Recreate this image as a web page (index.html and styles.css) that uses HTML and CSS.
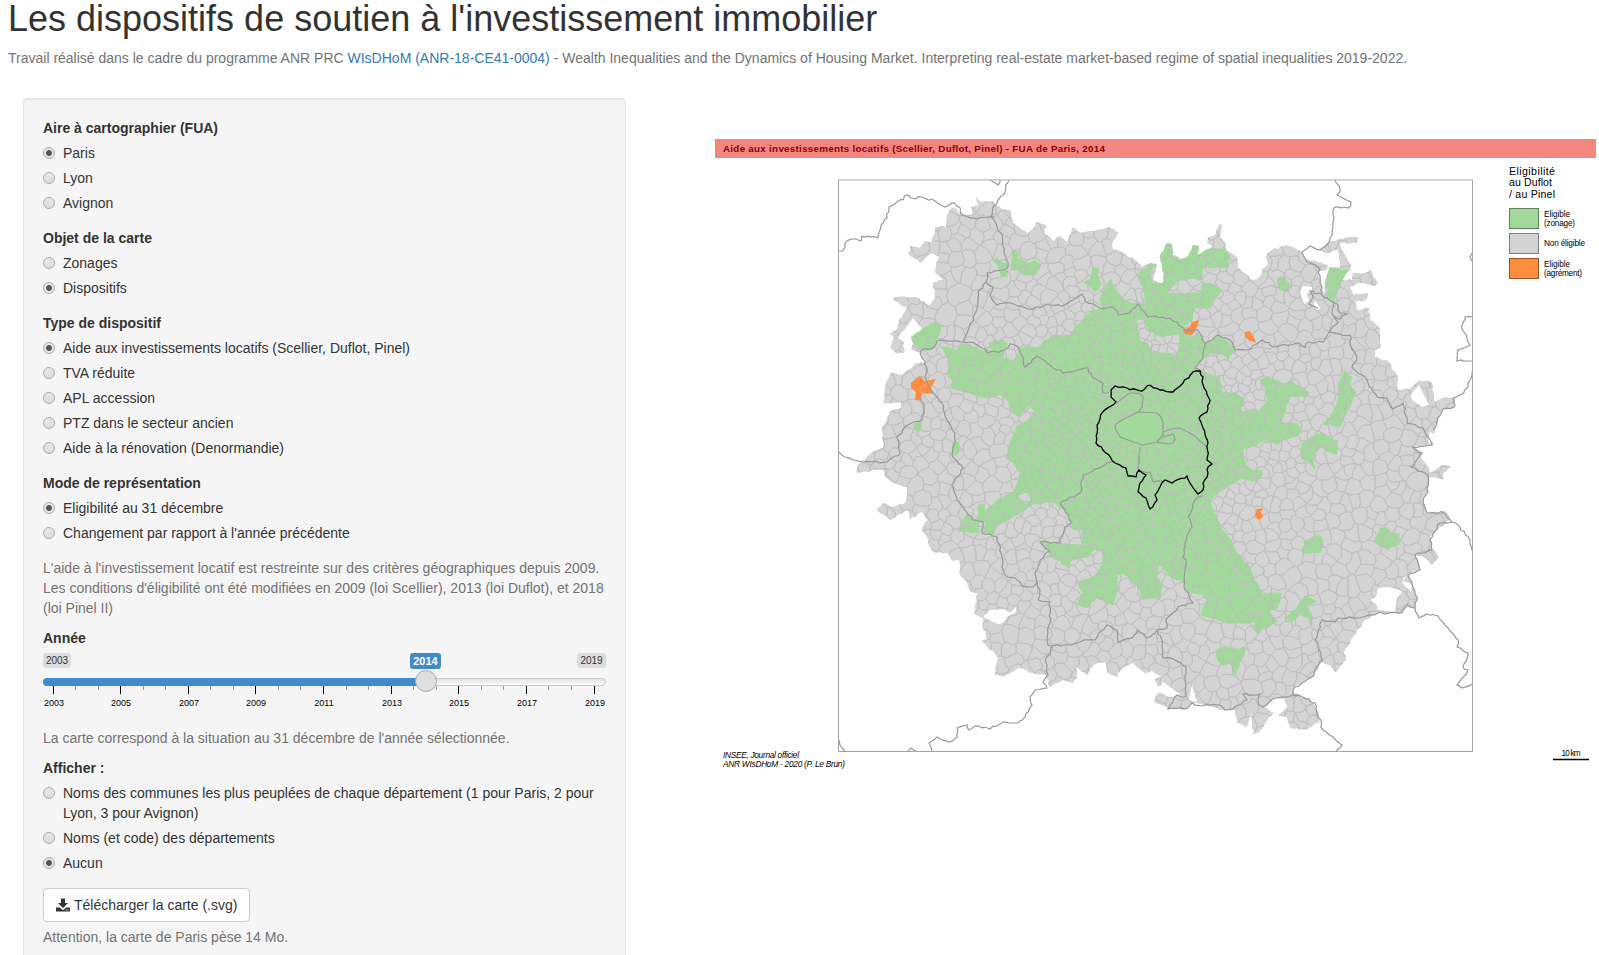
FILE: index.html
```html
<!DOCTYPE html>
<html lang="fr">
<head>
<meta charset="utf-8">
<title>Les dispositifs de soutien à l'investissement immobilier</title>
<link rel="stylesheet" href="styles.css">
</head>
<body>
<div class="page">
  <h1 class="title">Les dispositifs de soutien à l'investissement immobilier</h1>
  <p class="help intro">Travail réalisé dans le cadre du programme ANR PRC <a class="link" href="#">WIsDHoM (ANR-18-CE41-0004)</a> - Wealth Inequalities and the Dynamics of Housing Market. Interpreting real-estate market-based regime of spatial inequalities 2019-2022.</p>
  <div class="row">
    <form class="well">
      <div class="group">
        <div class="label">Aire à cartographier (FUA)</div>
        <div class="radio"><i class="dot on"></i><span>Paris</span></div>
        <div class="radio"><i class="dot"></i><span>Lyon</span></div>
        <div class="radio"><i class="dot"></i><span>Avignon</span></div>
      </div>
      <div class="group">
        <div class="label">Objet de la carte</div>
        <div class="radio"><i class="dot"></i><span>Zonages</span></div>
        <div class="radio"><i class="dot on"></i><span>Dispositifs</span></div>
      </div>
      <div class="group">
        <div class="label">Type de dispositif</div>
        <div class="radio"><i class="dot on"></i><span>Aide aux investissements locatifs (Scellier, Duflot, Pinel)</span></div>
        <div class="radio"><i class="dot"></i><span>TVA réduite</span></div>
        <div class="radio"><i class="dot"></i><span>APL accession</span></div>
        <div class="radio"><i class="dot"></i><span>PTZ dans le secteur ancien</span></div>
        <div class="radio"><i class="dot"></i><span>Aide à la rénovation (Denormandie)</span></div>
      </div>
      <div class="group">
        <div class="label">Mode de représentation</div>
        <div class="radio"><i class="dot on"></i><span>Eligibilité au 31 décembre</span></div>
        <div class="radio"><i class="dot"></i><span>Changement par rapport à l'année précédente</span></div>
      </div>
      <p class="help">L'aide à l'investissement locatif est restreinte sur des critères géographiques depuis 2009. Les conditions d'éligibilité ont été modifiées en 2009 (loi Scellier), 2013 (loi Duflot), et 2018 (loi Pinel II)</p>
      <div class="label">Année</div>
      <svg class="slider" id="slider" viewBox="43 653 563 60">
        <defs>
          <linearGradient id="track" x1="0" y1="0" x2="0" y2="1"><stop offset="0" stop-color="#dedede"/><stop offset="1" stop-color="#fff"/></linearGradient>
        </defs>
        <rect x="43" y="653" width="28" height="15" rx="3" fill="#dcdcdc"/>
        <text class="s-end" x="57" y="664">2003</text>
        <rect x="577" y="653" width="29" height="15" rx="3" fill="#dcdcdc"/>
        <text class="s-end" x="591.5" y="664">2019</text>
        <rect x="43.5" y="678.5" width="562" height="7" rx="3.5" fill="url(#track)" stroke="#ccc"/>
        <path d="M426 678H47a4 4 0 0 0 0 8H426z" fill="#428bca"/>
        <g id="ticks"></g>
        <rect x="410" y="653" width="31" height="16" rx="3" fill="#428bca"/>
        <text class="s-cur" x="425.5" y="665">2014</text>
        <circle cx="426" cy="681" r="10.5" fill="#dedede" stroke="#ababab"/>
      </svg>
      <p class="help">La carte correspond à la situation au 31 décembre de l'année sélectionnée.</p>
      <div class="group">
        <div class="label">Afficher :</div>
        <div class="radio"><i class="dot"></i><span>Noms des communes les plus peuplées de chaque département (1 pour Paris, 2 pour Lyon, 3 pour Avignon)</span></div>
        <div class="radio"><i class="dot"></i><span>Noms (et code) des départements</span></div>
        <div class="radio"><i class="dot on"></i><span>Aucun</span></div>
      </div>
      <a class="btn" href="#"><svg class="icon" viewBox="0 0 14 14"><path fill="#333" d="M5 .5h4v4.500h3L7 10 2 5h3zM0 9.500h3.800L7 12.200 10.200 9.500H14v4H0z"/><path fill="#fff" d="M9.500 11.500h1v1h-1zM11.500 11.500h1v1h-1z"/></svg>Télécharger la carte (.svg)</a>
      <p class="help after">Attention, la carte de Paris pèse 14 Mo.</p>
    </form>
    <svg class="map" viewBox="715 139 881 640">
      <defs><clipPath id="land"><path id="clip" clip-rule="evenodd"/></clipPath></defs>
      <rect x="715" y="139" width="881" height="19" fill="#f3877f"/>
      <text class="m-title" x="723" y="152" textLength="382">Aide aux investissements locatifs (Scellier, Duflot, Pinel) - FUA de Paris, 2014</text>
      <g id="areas"></g>
      <path id="mesh" clip-path="url(#land)"/>
      <g id="lines"></g>
      <path d="M838.500 179.800V751.500H1472.500V179.800" fill="none" stroke="#a3a3a3"/>
      <path d="M838 179.800H1473" stroke="#bdbdbd" stroke-width="1.300"/>
      <g class="m-head">
        <text x="1509" y="175" textLength="46">Eligibilité</text>
        <text x="1509" y="186" textLength="43">au Duflot</text>
        <text x="1509" y="198" textLength="46">/ au Pinel</text>
      </g>
      <rect x="1509.500" y="208.500" width="29" height="20" fill="#a1d99b" stroke="#61825d"/>
      <rect x="1509.500" y="233.500" width="29" height="20" fill="#d3d3d3" stroke="#7f7f7f"/>
      <rect x="1509.500" y="258.500" width="29" height="20" fill="#fd8d3c" stroke="#985524"/>
      <g class="m-label">
        <text x="1544" y="217" textLength="26">Eligible</text>
        <text x="1544" y="226" textLength="31">(zonage)</text>
        <text x="1544" y="246" textLength="41">Non éligible</text>
        <text x="1544" y="267" textLength="26">Eligible</text>
        <text x="1544" y="276" textLength="38">(agrément)</text>
        <text x="1561.500" y="756" textLength="19">10 km</text>
      </g>
      <path d="M1553 759.500H1589" stroke="#000" stroke-width="1.300"/>
      <g class="m-src">
        <text x="723" y="758" textLength="76">INSEE, Journal officiel</text>
        <text x="723" y="767" textLength="122">ANR WIsDHoM - 2020 (P. Le Brun)</text>
      </g>
    </svg>
  </div>
</div>
<script src="map.js"></script>
</body>
</html>
```

FILE: styles.css
```css
* { box-sizing: border-box; }
body {
  margin: 0;
  background: #fff;
  color: #333;
  font: 14px/20px "Liberation Sans", Arial, sans-serif;
}
.page { height: 955px; padding: 0 0 0 8px; overflow: hidden; }
.title { margin: 0; font-size: 36px; font-weight: 500; line-height: 38.6px; white-space: nowrap; }
.help { margin: 0 0 10px; color: #737373; }
.intro { margin: 9.400px 0 30px; white-space: nowrap; }
.link { color: #337ab7; text-decoration: none; }
.row { display: flex; align-items: flex-start; gap: 89px; padding-left: 15px; }
.well {
  flex: none;
  width: 603px;
  height: 900px;
  padding: 19px;
  background: #f5f5f5;
  border: 1px solid #e3e3e3;
  border-radius: 4px;
  box-shadow: inset 0 1px 1px rgba(0, 0, 0, .05);
}
.group { margin-bottom: 15px; }
.label { font-weight: 700; }
.radio { display: flex; gap: 8px; margin-top: 5px; }
.dot {
  flex: none;
  width: 12px;
  height: 12px;
  margin-top: 4px;
  border: 1px solid #acacac;
  border-radius: 50%;
  background: linear-gradient(#e8e8e8, #dcdcdc);
}
.dot.on { background: radial-gradient(circle, #585858 0 2.600px, #e6e6e6 3.300px); }
.slider { display: block; width: 563px; height: 60px; margin: 5px 0 15px; }
.slider text { text-anchor: middle; }
.s-end { font-size: 10px; fill: #333; }
.s-cur { font-size: 11px; font-weight: 700; fill: #fff; }
.s-tick { font-size: 9px; fill: #000; }
.btn {
  display: inline-flex;
  align-items: center;
  gap: 4px;
  height: 34px;
  padding: 0 12px;
  border: 1px solid #ccc;
  border-radius: 4px;
  background: #fff;
  color: #333;
  text-decoration: none;
  vertical-align: top;
}
.icon { width: 14px; height: 14px; }
.after { margin-top: 5px; }
.map { flex: none; width: 881px; height: 640px; margin-top: 41px; }
.m-title { font-size: 9.800px; font-weight: 700; fill: #8b0000; }
.m-head { font-size: 10.600px; fill: #000; }
.m-label { font-size: 8.200px; fill: #000; }
.m-src { font-size: 8.300px; font-style: italic; fill: #000; }
#mesh { fill: none; stroke: #bebebe; stroke-width: .75; }
```

FILE: map.js
```js
const NS = 'http://www.w3.org/2000/svg';
let seed = 7;
const rnd = () => ((seed = (seed * 16807) % 2147483647) / 2147483647);
const parse = s => s.trim().split(/\s+/).map(p => p.split(',').map(Number));

function add(parent, name, attrs) {
  const el = document.createElementNS(NS, name);
  for (const k in attrs) el.setAttribute(k, attrs[k]);
  document.getElementById(parent).appendChild(el);
  return el;
}

// Adds small wiggles between the vertices of a line.
function rough(pts, amp, closed) {
  const src = closed ? pts.concat([pts[0]]) : pts;
  const out = [src[0]];
  for (let i = 1; i < src.length; i++) {
    const [ax, ay] = src[i - 1], [bx, by] = src[i];
    const n = Math.max(1, Math.round(Math.hypot(bx - ax, by - ay) / 3.5));
    for (let k = 1; k < n; k++) {
      out.push([ax + (bx - ax) * k / n + (rnd() - .5) * amp, ay + (by - ay) * k / n + (rnd() - .5) * amp]);
    }
    out.push([bx, by]);
  }
  return out;
}
const toPath = (pts, closed) => 'M' + pts.map(p => p[0].toFixed(1) + ' ' + p[1].toFixed(1)).join('L') + (closed ? 'Z' : '');

const outline = `976,197 983,202 993,201 1002,209 1010,210 1013,223 1028,233 1033,228 1036,222 1047,226 1044,233 1054,241 1060,236 1067,242 1073,227 1080,233 1097,230 1109,227 1119,233 1113,240 1113,249 1133,258 1142,267 1148,264 1157,264 1153,280 1163,283 1164,274 1160,256 1167,243 1172,244 1173,255 1180,259 1188,256 1193,245 1199,246 1197,255 1203,252 1212,247 1207,243 1208,238 1213,236 1219,224 1222,225 1220,237 1225,242 1226,250 1237,257 1238,267 1253,280 1261,275 1262,269 1268,264 1266,257 1272,250 1287,245 1303,252 1305,258 1328,265 1327,270 1318,272 1322,287 1325,293 1325,280 1330,267 1340,267 1338,250 1327,253 1320,250 1330,241 1350,237 1358,237 1357,243 1340,243 1343,252 1351,265 1348,272 1342,280 1352,280 1353,273 1365,273 1370,270 1378,282 1375,286 1360,283 1350,287 1353,295 1368,293 1365,300 1355,302 1357,310 1369,308 1370,320 1380,328 1381,347 1375,350 1375,357 1387,360 1398,377 1398,390 1410,389 1419,380 1432,383 1435,402 1442,398 1454,397 1454,407 1443,409 1435,425 1433,445 1427,445 1413,447 1422,452 1421,458 1429,468 1430,473 1442,465 1451,467 1443,473 1444,480 1429,477 1428,492 1423,500 1427,513 1445,511 1450,520 1440,527 1430,537 1432,548 1439,557 1432,565 1425,558 1415,555 1420,570 1408,574 1402,580 1413,585 1417,598 1415,608 1407,605 1402,613 1378,613 1365,620 1353,637 1344,653 1346,660 1335,672 1330,665 1322,662 1312,677 1294,687 1293,694 1310,700 1317,710 1320,722 1307,730 1290,728 1287,717 1277,716 1287,707 1285,698 1275,698 1265,707 1273,713 1265,723 1258,733 1253,734 1252,713 1247,727 1237,722 1235,710 1223,710 1210,706 1192,703 1187,709 1168,709 1154,702 1158,693 1173,697 1180,694 1163,682 1158,687 1154,680 1161,677 1152,671 1145,673 1133,663 1123,668 1117,677 1107,672 1105,662 1093,666 1087,675 1076,667 1077,678 1073,683 1063,680 1050,687 1046,675 1033,673 1020,668 1003,677 994,675 998,657 987,647 982,641 987,639 983,627 983,618 974,613 977,593 971,592 967,583 960,575 959,560 952,561 947,553 933,552 922,528 928,520 922,512 910,520 907,510 890,520 877,510 883,503 892,507 906,502 907,487 899,485 885,477 883,470 857,473 858,465 872,452 883,448 882,427 892,410 901,408 900,402 884,404 886,382 892,372 902,375 917,363 926,363 920,352 911,350 913,343 911,337 922,329 913,318 902,332 897,338 904,342 904,353 897,354 890,347 894,338 889,334 897,330 899,320 907,307 893,300 894,297 915,297 930,305 935,297 933,282 943,280 935,270 939,257 931,253 920,263 908,253 910,246 920,248 925,241 932,243 935,227 946,227 947,215 954,207 963,215 972,215 971,207 978,205`;

const holes = [
  '1419,385 1429,405 1422,407 1412,400 1411,394',
  '1395,612 1397,598 1403,592 1397,589 1387,587 1378,588 1376,597 1370,600 1377,605 1377,610',
  '983,617 990,610 1005,609 1010,613 1016,607 1016,612 1007,617 1003,623 998,624',
  '1303,286 1312,287 1312,291 1307,293 1309,301 1304,304 1300,292',
  '1315,300 1320,308 1318,311 1313,304',
  '1430,432 1433,433 1433,442 1429,444 1428,438',
  '1192,684 1189,700 1197,702 1194,692',
  '1407,575 1413,582 1411,592 1402,583'
];

const green = [
  `940,345 957,350 960,344 967,343 982,350 992,350 988,343 1002,339 1008,344 1005,352 1003,358 1014,360 1020,347 1037,347 1053,335 1070,335 1082,320 1092,310 1102,307 1100,298 1105,287 1111,278 1115,290 1125,300 1133,303 1145,303 1143,290 1137,275 1148,264 1157,264 1150,273 1153,283 1163,283 1164,274 1160,256 1167,243 1172,244 1173,255 1180,259 1188,256 1193,245 1199,246 1197,255 1203,252 1212,247 1225,250 1231,256 1227,268 1203,268 1202,280 1190,279 1177,282 1167,293 1200,293 1203,282 1215,285 1223,290 1215,298 1210,307 1195,308 1193,320 1183,327 1193,337 1198,333 1207,342 1220,335 1235,350 1228,360 1220,353 1208,355 1195,368 1207,373 1220,377 1223,392 1237,392 1243,400 1242,411 1260,410 1267,400 1265,388 1259,380 1268,377 1283,383 1292,380 1297,385 1310,392 1307,397 1290,398 1285,412 1282,422 1297,423 1303,432 1297,437 1283,440 1278,445 1265,440 1253,447 1243,450 1245,463 1252,470 1262,470 1263,475 1257,482 1243,479 1233,483 1222,490 1210,500 1215,513 1223,530 1232,540 1237,553 1250,567 1257,583 1263,593 1282,593 1278,608 1270,612 1278,622 1263,628 1258,635 1252,628 1255,623 1228,624 1200,615 1207,600 1203,595 1187,593 1183,582 1170,577 1160,565 1157,577 1163,587 1160,598 1142,600 1138,588 1129,578 1124,574 1117,575 1118,590 1113,605 1097,598 1087,608 1075,605 1083,593 1077,582 1092,577 1102,565 1103,552 1095,550 1087,558 1073,560 1068,568 1057,560 1047,557 1050,552 1040,542 1060,543 1083,545 1082,530 1072,530 1070,522 1063,510 1053,502 1032,505 1020,513 997,527 993,535 983,533 985,522 979,523 980,533 958,532 967,513 977,520 978,505 985,503 985,510 1000,498 1013,492 1020,472 1012,462 1005,457 1012,437 1017,423 1022,418 1010,412 1008,402 1000,395 983,398 967,393 950,388 952,380 947,373 948,360`,
  '992,260 997,256 1002,262 1008,263 1007,277 1002,277 998,267',
  '1012,250 1018,252 1018,258 1027,263 1035,260 1042,265 1036,275 1024,275 1010,268 1012,258',
  '1092,268 1099,268 1098,275 1102,285 1095,292 1088,286 1083,283 1091,278',
  '911,337 922,329 935,322 943,325 937,340 932,350 922,351 913,343',
  '1277,278 1285,277 1292,287 1287,292 1278,288',
  '1330,267 1349,270 1342,281 1338,292 1334,302 1325,298 1328,290 1325,283',
  '1344,370 1352,377 1350,384 1356,392 1352,402 1348,410 1340,427 1323,425 1333,412 1338,398 1338,385',
  '1322,433 1330,438 1338,440 1337,455 1327,452 1320,447 1313,455 1315,470 1308,462 1300,457 1302,443 1310,437',
  '1302,550 1306,540 1320,535 1323,540 1321,553 1302,554',
  '1373,541 1380,528 1388,528 1390,533 1400,534 1400,544 1388,550 1378,545',
  '1305,595 1317,602 1307,606 1313,617 1311,627 1308,618 1300,615 1293,622 1285,618 1297,607',
  '1216,650 1225,646 1238,649 1245,646 1245,655 1240,662 1236,675 1240,680 1234,674 1230,663 1224,666 1217,660',
  '913,424 922,421 921,429 918,435 914,428',
  '953,442 959,442 961,448 956,456 952,455'
];

const greyInGreen = [
  '1137,320 1144,320 1150,332 1160,337 1178,334 1180,345 1176,355 1168,353 1152,352 1148,343 1140,340',
  '1017,421 1028,405 1035,412 1028,420 1018,425',
  '1018,495 1027,493 1032,500 1025,504'
];

const orange = [
  '911,383 920,376 925,381 936,379 931,387 933,394 922,393 921,400 915,400 916,392 911,388',
  '1183,330 1190,327 1192,322 1199,320 1197,327 1192,335 1185,334',
  '1245,332 1250,331 1256,342 1250,341 1245,337',
  '1257,509 1263,508 1261,512 1263,517 1259,520 1255,516'
];

const borders = [
  '839,251 843,251 845,243 852,239 861,241 862,236 878,238 883,223 887,218 889,207 897,202 908,195 911,198 922,197 935,201 945,207 955,203 963,215 977,219 988,217 995,217',
  '1009,180 1005,192 998,200 993,207 991,217 997,227 1002,235 1004,253 1008,267 1002,270 987,273 986,282 978,292 977,307 972,322 963,342 950,341 937,341 933,348 922,350 920,352 927,368 925,378 935,395 942,403 947,420 955,433 952,455 963,468 952,485 957,500 973,520 983,522 982,533 997,537 1002,557 1002,567 1007,577 1015,578 1022,586 1033,587 1037,582 1035,573 1040,560 1047,552 1050,552 1040,542 1060,543 1065,527 1072,522 1060,503 1080,493 1083,475 1107,463 1115,462',
  '986,282 993,287 990,295 997,305 1010,303 1028,309 1050,305 1062,306 1082,294 1085,301 1100,308 1113,307 1118,315 1130,313 1138,304 1148,317 1163,317 1177,322 1185,330 1198,330 1205,344 1203,358 1195,368 1202,372',
  '1205,344 1218,335 1232,342 1235,350 1247,350 1262,340 1273,347 1297,343 1305,347 1308,342 1323,342 1329,332 1338,322 1332,313 1333,302 1322,295 1310,291 1313,297 1309,304 1318,308',
  '1322,295 1322,287 1318,267 1307,262 1302,252 1310,246 1320,250 1329,242 1333,227 1334,208 1348,208 1351,202 1337,195 1340,190 1335,180',
  '1333,302 1338,305 1340,313 1347,314 1340,319 1334,316',
  '1329,332 1350,335 1351,347 1357,357 1352,367 1367,380 1377,397 1387,398 1393,409 1403,403 1407,423 1423,428 1428,437 1432,445 1413,447 1422,453 1411,467 1428,475 1428,492 1423,502 1427,513 1443,512 1452,522 1460,527 1470,540 1472,550',
  '1452,522 1440,523 1430,540 1432,550 1415,555 1420,570 1408,575 1413,587 1417,600 1415,608 1407,605 1402,613 1378,613 1362,617 1338,618 1335,622 1322,620 1315,640 1322,660 1312,677 1295,687 1293,694 1298,695 1275,698 1263,707 1258,703 1260,694 1243,694 1247,700 1233,709 1225,710 1220,705 1202,706 1192,703 1188,708 1168,709 1177,695 1185,697 1186,667 1175,660 1163,658 1162,640 1157,630 1167,628 1167,618 1178,607 1193,603 1184,587 1186,560 1183,557 1185,543 1192,527 1188,517 1195,500 1203,495',
  '1157,630 1147,638 1138,630 1132,638 1118,642 1117,630 1107,625 1095,640 1082,641 1068,645 1048,645 1047,638 1050,623 1050,602 1038,600 1040,590 1037,582',
  '1053,646 1046,658 1048,675 1043,682 1047,688 1035,690 1030,697 1032,705 1025,717 1018,723 1003,722 990,729 975,726 969,730 967,725 957,728 957,737 950,742 937,737 929,743 932,751',
  '839,452 845,457 862,462 887,462 900,453 897,437 908,425 922,420 924,407 920,398',
  '1415,608 1419,618 1427,614 1438,616 1448,628 1458,640 1457,647 1468,653 1463,667 1468,670 1457,685 1462,688 1472,684',
  '1298,695 1315,703 1317,713 1323,730 1333,737 1342,745 1336,751',
  '1472,372 1468,387 1460,395 1454,398 1454,407 1443,409 1437,423 1433,430',
  '1472,317 1465,317 1462,329 1470,345 1458,350 1457,361 1472,361',
  '1472,253 1470,257 1472,261',
  '990,180 995,183 998,185 1000,180',
  '839,740 840,745 845,751',
  '908,751 911,748 916,751',
  '963,342 970,342 982,348 987,353 1005,350 1010,344 1018,347 1023,357 1025,367 1037,356 1050,365 1063,373 1088,368 1092,377 1103,383 1103,392 1109,393'
];

const city = '1138,412 1157,413 1161,417 1163,423 1163,435 1157,442 1142,445 1131,441 1120,437 1115,428 1116,424 1122,420 1138,412';
const inner = [
  '1117,402 1130,393 1139,393 1143,397 1142,407 1138,412',
  '1163,432 1172,429 1180,428 1193,435 1207,447',
  '1163,437 1173,434 1175,439 1173,443 1168,444 1157,442',
  '1140,447 1138,470 1147,473 1150,472 1153,482 1162,480'
];

const ring = '1150,385 1142,391 1127,388 1115,386 1111,390 1111,397 1116,402 1102,413 1097,425 1096,443 1103,450 1115,463 1126,468 1128,476 1136,477 1139,470 1146,475 1140,483 1138,492 1146,498 1150,509 1157,500 1155,495 1165,480 1172,483 1187,476 1190,483 1198,494 1203,490 1203,483 1208,473 1208,467 1212,464 1207,460 1208,443 1203,428 1199,418 1207,412 1210,400 1202,382 1203,377 1200,371 1193,372 1183,383 1173,392 1160,390 1150,385';

const land = toPath(rough(parse(outline), 2, true), true) + holes.map(h => toPath(parse(h), true)).join('');
document.getElementById('clip').setAttribute('d', land);
add('areas', 'path', { d: land, fill: '#d3d3d3', 'fill-rule': 'evenodd' });
green.forEach(g => add('areas', 'path', { d: toPath(rough(parse(g), 1.6, true), true), fill: '#a1d99b' }));
greyInGreen.forEach(g => add('areas', 'path', { d: toPath(rough(parse(g), 1.4, true), true), fill: '#d3d3d3' }));

// Commune mesh: irregular Voronoi cells, smaller near the centre.
const spacing = (x, y) => {
  if (Math.hypot(x - 955, y - 306) < 13 || Math.hypot(x - 1224, y - 600) < 15) return 24;
  const base = Math.min(10.5, 5.4 + Math.max(0, Math.hypot(x - 1140, y - 430) - 60) / 28);
  return base * (.55 + rnd() * .8);
};
const sites = [];
for (let i = 0; i < 14000; i++) {
  const x = 850 + rnd() * 612, y = 190 + rnd() * 552, r = spacing(x, y);
  if (sites.every(s => Math.hypot(s[0] - x, s[1] - y) > (r + s[2]) / 2)) sites.push([x, y, r]);
}
let mesh = '';
sites.forEach(([x, y]) => {
  const R = 22;
  let cell = [[x - R, y - R], [x + R, y - R], [x + R, y + R], [x - R, y + R]];
  sites.forEach(([u, v]) => {
    const dx = u - x, dy = v - y;
    if ((!dx && !dy) || Math.abs(dx) > 42 || Math.abs(dy) > 42) return;
    const c = (u * u + v * v - x * x - y * y) / 2;
    const f = p => p[0] * dx + p[1] * dy - c;
    const next = [];
    cell.forEach((p, i) => {
      const q = cell[(i + 1) % cell.length], a = f(p), b = f(q);
      if (a <= 0) next.push(p);
      if (a * b < 0) next.push([p[0] + (q[0] - p[0]) * a / (a - b), p[1] + (q[1] - p[1]) * a / (a - b)]);
    });
    cell = next;
  });
  // Shared edges bend the same way on both sides.
  const bent = [];
  cell.forEach((p, i) => {
    const q = cell[(i + 1) % cell.length];
    const mx = (p[0] + q[0]) / 2, my = (p[1] + q[1]) / 2, len = Math.hypot(p[0] - q[0], p[1] - q[1]);
    bent.push(p);
    if (len > 3) bent.push([mx + Math.sin(mx * 7.3 + my * 3.1) * len * .2, my + Math.cos(mx * 2.7 - my * 5.9) * len * .2]);
  });
  if (bent.length) mesh += toPath(bent, true);
});
document.getElementById('mesh').setAttribute('d', mesh);

orange.forEach(o => add('lines', 'path', { d: toPath(parse(o), true), fill: '#fd8d3c' }));
add('lines', 'path', { d: 'M919 391L921 387L929 383M919 391L923 393', fill: 'none', stroke: '#c9b09c', 'stroke-width': .8 });
borders.forEach(b => add('lines', 'path', { d: toPath(rough(parse(b), 2.4)), fill: 'none', stroke: '#999', 'stroke-width': 1.2 }));
add('lines', 'path', { d: toPath(parse(city), true), fill: '#a1d99b', stroke: '#999', 'stroke-width': 1.2 });
inner.forEach(b => add('lines', 'path', { d: toPath(rough(parse(b), .6)), fill: 'none', stroke: '#999', 'stroke-width': 1.2 }));
add('lines', 'path', { d: toPath(rough(parse(ring), 2)), fill: 'none', stroke: '#000', 'stroke-width': 1.3 });

// Slider graduations.
for (let i = 0; i <= 24; i++) {
  const major = i % 3 === 0, x = Math.floor(53 + i * 541 / 24);
  add('ticks', 'rect', { x, y: 686, width: 1, height: major ? 8 : 4, fill: major ? '#000' : '#999' });
  if (major) add('ticks', 'text', { x: x + 1, y: 706, class: 's-tick' }).textContent = 2003 + i / 3 * 2;
}
```
